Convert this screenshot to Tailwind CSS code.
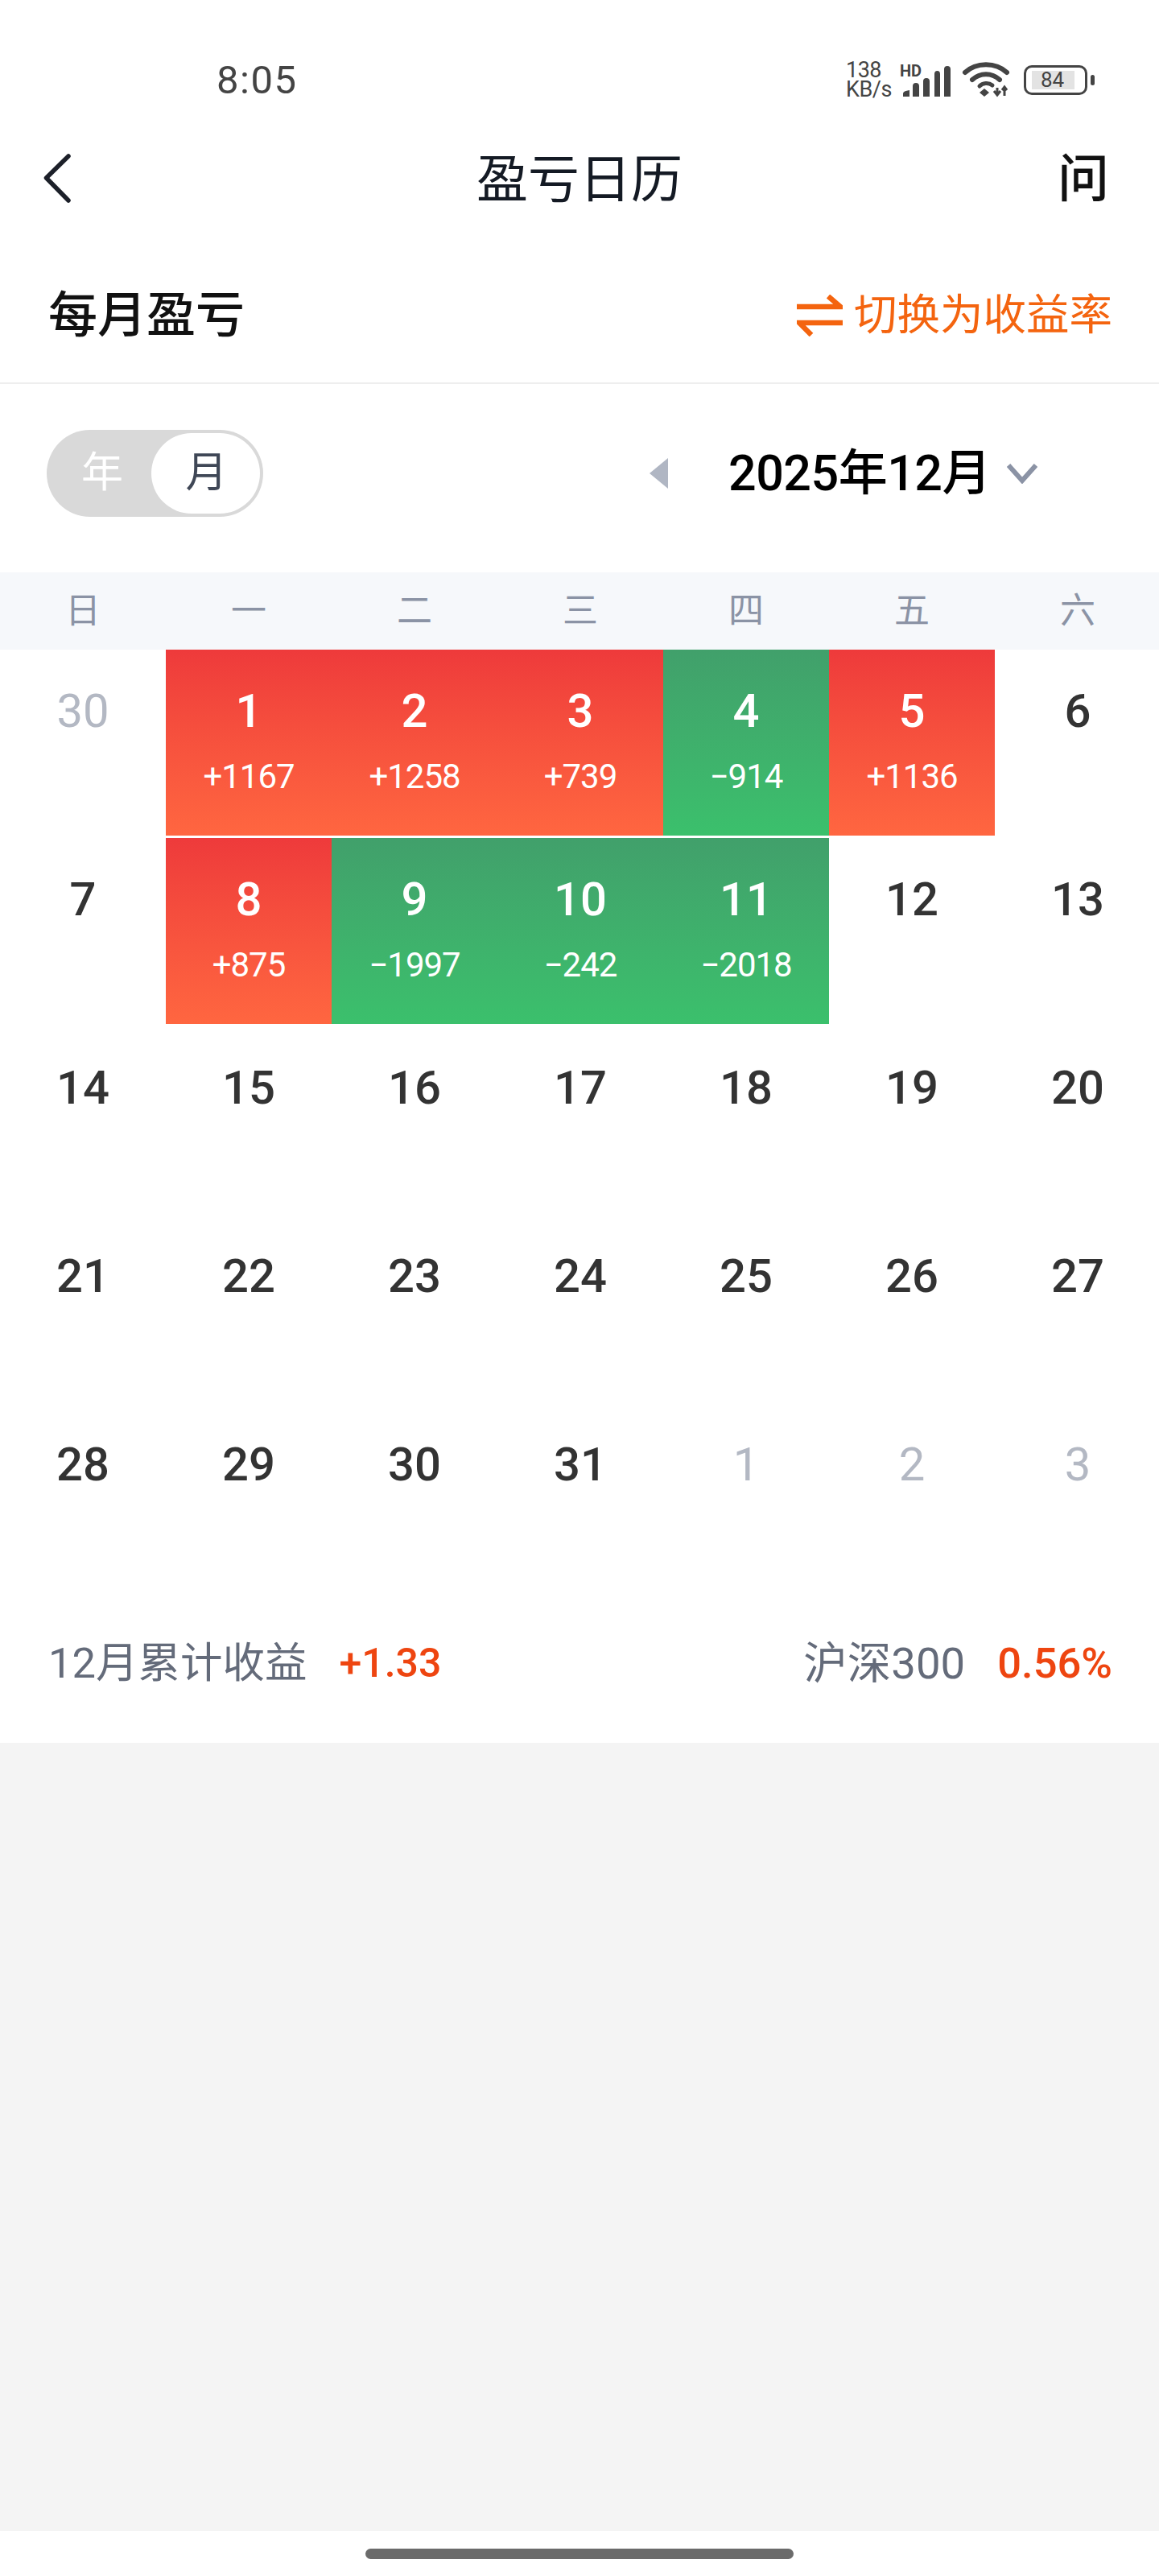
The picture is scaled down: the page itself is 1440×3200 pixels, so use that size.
<!DOCTYPE html>
<html lang="zh">
<head>
<meta charset="utf-8">
<title>盈亏日历</title>
<script src="https://cdn.jsdelivr.net/npm/@tailwindcss/browser@4"></script>
</head>
<body class="bg-white">
<div class="w-[1440px] h-[3200px] flex flex-col bg-white overflow-hidden font-[Roboto,'Noto_Sans_CJK_SC',sans-serif] text-[#333]">

  <!-- status bar -->
  <div class="h-[152px] flex items-start justify-between pt-[72px] pl-[269px] pr-[89px] text-[#444]">
    <span class="text-[49px] leading-[56px] font-normal tracking-[1.5px]">8:05</span>
    <div class="flex items-start">
      <div class="w-[64px] pt-[3px] text-[27px] leading-[24px] tracking-[-0.5px]"><div>138</div><div>KB/s</div></div>
      <svg class="ml-[3px] overflow-visible" width="68" height="50" viewBox="0 0 68 50">
        <text x="0" y="23" font-size="20" font-weight="700" fill="#444" font-family="Roboto">HD</text>
        <path d="M4 48V44q0-3 8-4v8zM16 48V35q0-4 4-4t4 4v13zM29 48V29q0-4 4-4t4 4v19zM43 48V20q0-4 3.500-4t3.500 4v28zM55 48V14q0-4 4-4t4 4v34z" fill="#444"/>
      </svg>
      <svg class="ml-[9px]" width="60" height="50" viewBox="0 0 60 50" fill="none">
        <path d="M4 18C18 5 42 5 56 18" stroke="#444" stroke-width="6" stroke-linecap="round"/>
        <path d="M13 27C23 18 37 18 47 27" stroke="#444" stroke-width="6" stroke-linecap="round"/>
        <path d="M22 35C26 31 33 30 38 34" stroke="#444" stroke-width="5" stroke-linecap="round"/>
        <path d="M28 38l6 5-6 5-6-5z" fill="#444"/>
        <path d="M44 46V37M40 41l4 5 4-5M53 47V37M50 40l3-4 3 4" stroke="#444" stroke-width="3"/>
      </svg>
      <div class="ml-[17px] mt-[9px] relative w-[79px] h-[37px] rounded-[10px] border-[3px] border-[#444] flex">
        <div class="absolute left-[7px] top-[4px] w-[53px] h-[23px] bg-[#e3e3e3]"></div>
        <span class="relative w-full text-center text-[26px] leading-[31px] pr-[8px]">84</span>
        <div class="absolute -right-[12px] top-[9px] w-[5px] h-[13px] rounded-[3px] bg-[#444]"></div>
      </div>
    </div>
  </div>

  <!-- nav bar -->
  <div class="h-[144px] relative flex items-center justify-center">
    <svg class="absolute left-[50px] top-[37px]" width="44" height="70" viewBox="0 0 44 70" fill="none">
      <path d="M35 5L7.500 32 35 60" stroke="#1c2029" stroke-width="5.500" stroke-linecap="round" stroke-linejoin="round"/>
    </svg>
    <span class="text-[64px] leading-[72px] text-[#141a24] font-normal">盈亏日历</span>
    <span class="absolute right-[62px] top-[35px] text-[64px] leading-[72px] text-[#111] font-medium">问</span>
  </div>

  <!-- section header -->
  <div class="h-[181px] pt-[12px] pl-[60px] pr-[58px] flex items-center justify-between border-b-2 border-[#eeeeee]">
    <span class="text-[61px] leading-[70px] font-medium text-[#111]">每月盈亏</span>
    <div class="flex items-center gap-[14px] text-[#f4640f]">
      <svg width="57" height="52" viewBox="0 0 57 52" fill="none">
        <path d="M0 15H54L39 2" stroke="#f4640f" stroke-width="6.500"/>
        <path d="M57 35H3L18 50" stroke="#f4640f" stroke-width="6.500"/>
      </svg>
      <span class="text-[53.500px] leading-[60px]">切换为收益率</span>
    </div>
  </div>

  <!-- controls -->
  <div class="h-[234px] pb-[12px] pl-[58px] flex items-center">
    <div class="w-[269px] h-[108px] p-[4px] rounded-[54px] bg-[#d9d9d9] flex items-center justify-between">
      <span class="w-[128px] pl-[4px] text-center text-[52px] leading-[60px] text-white">年</span>
      <span class="w-[137px] h-[100px] pl-[2px] rounded-[50px] bg-white flex items-center justify-center text-[52px] leading-[60px] text-[#3f4756]">月</span>
    </div>
    <svg class="ml-[480px]" width="23" height="38" viewBox="0 0 23 38"><path d="M23 0V38L0 19z" fill="#b0b6c3"/></svg>
    <span class="ml-[75px] text-[61px] leading-[70px] font-medium text-black tracking-[-0.5px]">2025年12月</span>
    <svg class="ml-[20px]" width="38" height="26" viewBox="0 0 38 26" fill="none"><path d="M2 3L19 22 36 3" stroke="#8b93a5" stroke-width="6"/></svg>
  </div>

  <!-- weekdays -->
  <div class="h-[96px] grid grid-cols-[repeat(7,206px)] items-center bg-[#f6f8fb] text-center text-[44px] leading-[50px] text-[#8b93a5]">
    <span>日</span><span>一</span><span>二</span><span>三</span><span>四</span><span>五</span><span>六</span>
  </div>

  <!-- calendar -->
  <div class="grid grid-cols-[repeat(7,206px)] auto-rows-[234px] text-center">
    <div class="h-[231px] pt-[44px] text-[58px] leading-[64px] text-[#b3b8c3]">30</div>
    <div class="h-[231px] pt-[44px] bg-linear-to-b from-[#ee3a3b] to-[#ff6640] text-white"><div class="text-[58px] leading-[64px] font-medium">1</div><div class="mt-[25px] text-[42px] leading-[50px] tracking-[-1px]">+1167</div></div>
    <div class="h-[231px] pt-[44px] bg-linear-to-b from-[#ee3a3b] to-[#ff6640] text-white"><div class="text-[58px] leading-[64px] font-medium">2</div><div class="mt-[25px] text-[42px] leading-[50px] tracking-[-1px]">+1258</div></div>
    <div class="h-[231px] pt-[44px] bg-linear-to-b from-[#ee3a3b] to-[#ff6640] text-white"><div class="text-[58px] leading-[64px] font-medium">3</div><div class="mt-[25px] text-[42px] leading-[50px] tracking-[-1px]">+739</div></div>
    <div class="h-[231px] pt-[44px] bg-linear-to-b from-[#41a06b] to-[#3bc06c] text-white"><div class="text-[58px] leading-[64px] font-medium">4</div><div class="mt-[25px] text-[42px] leading-[50px] tracking-[-1px]">−914</div></div>
    <div class="h-[231px] pt-[44px] bg-linear-to-b from-[#ee3a3b] to-[#ff6640] text-white"><div class="text-[58px] leading-[64px] font-medium">5</div><div class="mt-[25px] text-[42px] leading-[50px] tracking-[-1px]">+1136</div></div>
    <div class="h-[231px] pt-[44px] text-[58px] leading-[64px] font-medium">6</div>

    <div class="h-[231px] pt-[44px] text-[58px] leading-[64px] font-medium">7</div>
    <div class="h-[231px] pt-[44px] bg-linear-to-b from-[#ee3a3b] to-[#ff6640] text-white"><div class="text-[58px] leading-[64px] font-medium">8</div><div class="mt-[25px] text-[42px] leading-[50px] tracking-[-1px]">+875</div></div>
    <div class="h-[231px] pt-[44px] bg-linear-to-b from-[#41a06b] to-[#3bc06c] text-white"><div class="text-[58px] leading-[64px] font-medium">9</div><div class="mt-[25px] text-[42px] leading-[50px] tracking-[-1px]">−1997</div></div>
    <div class="h-[231px] pt-[44px] bg-linear-to-b from-[#41a06b] to-[#3bc06c] text-white"><div class="text-[58px] leading-[64px] font-medium">10</div><div class="mt-[25px] text-[42px] leading-[50px] tracking-[-1px]">−242</div></div>
    <div class="h-[231px] pt-[44px] bg-linear-to-b from-[#41a06b] to-[#3bc06c] text-white"><div class="text-[58px] leading-[64px] font-medium">11</div><div class="mt-[25px] text-[42px] leading-[50px] tracking-[-1px]">−2018</div></div>
    <div class="h-[231px] pt-[44px] text-[58px] leading-[64px] font-medium">12</div>
    <div class="h-[231px] pt-[44px] text-[58px] leading-[64px] font-medium">13</div>

    <div class="h-[231px] pt-[44px] text-[58px] leading-[64px] font-medium">14</div>
    <div class="h-[231px] pt-[44px] text-[58px] leading-[64px] font-medium">15</div>
    <div class="h-[231px] pt-[44px] text-[58px] leading-[64px] font-medium">16</div>
    <div class="h-[231px] pt-[44px] text-[58px] leading-[64px] font-medium">17</div>
    <div class="h-[231px] pt-[44px] text-[58px] leading-[64px] font-medium">18</div>
    <div class="h-[231px] pt-[44px] text-[58px] leading-[64px] font-medium">19</div>
    <div class="h-[231px] pt-[44px] text-[58px] leading-[64px] font-medium">20</div>

    <div class="h-[231px] pt-[44px] text-[58px] leading-[64px] font-medium">21</div>
    <div class="h-[231px] pt-[44px] text-[58px] leading-[64px] font-medium">22</div>
    <div class="h-[231px] pt-[44px] text-[58px] leading-[64px] font-medium">23</div>
    <div class="h-[231px] pt-[44px] text-[58px] leading-[64px] font-medium">24</div>
    <div class="h-[231px] pt-[44px] text-[58px] leading-[64px] font-medium">25</div>
    <div class="h-[231px] pt-[44px] text-[58px] leading-[64px] font-medium">26</div>
    <div class="h-[231px] pt-[44px] text-[58px] leading-[64px] font-medium">27</div>

    <div class="h-[231px] pt-[44px] text-[58px] leading-[64px] font-medium">28</div>
    <div class="h-[231px] pt-[44px] text-[58px] leading-[64px] font-medium">29</div>
    <div class="h-[231px] pt-[44px] text-[58px] leading-[64px] font-medium">30</div>
    <div class="h-[231px] pt-[44px] text-[58px] leading-[64px] font-medium">31</div>
    <div class="h-[231px] pt-[44px] text-[58px] leading-[64px] text-[#b3b8c3]">1</div>
    <div class="h-[231px] pt-[44px] text-[58px] leading-[64px] text-[#b3b8c3]">2</div>
    <div class="h-[231px] pt-[44px] text-[58px] leading-[64px] text-[#b3b8c3]">3</div>
  </div>

  <!-- summary -->
  <div class="h-[188px] pb-[10px] pl-[60px] pr-[58px] flex items-center justify-between leading-[60px]">
    <div class="flex items-center gap-[40px]"><span class="text-[52.500px] text-[#646b7a]">12月累计收益</span><span class="text-[50px] text-[#ee4510] font-medium">+1.33</span></div>
    <div class="flex items-center gap-[40px]"><span class="text-[54.500px] text-[#646b7a]">沪深300</span><span class="text-[52.500px] text-[#ee4510] font-medium">0.56%</span></div>
  </div>

  <div class="flex-1 bg-[#f4f4f4]"></div>

  <!-- home indicator -->
  <div class="h-[56px] pt-[22px] flex justify-center bg-white">
    <div class="w-[532px] h-[13px] rounded-[7px] bg-[#6b6b6b]"></div>
  </div>
</div>
</body>
</html>
